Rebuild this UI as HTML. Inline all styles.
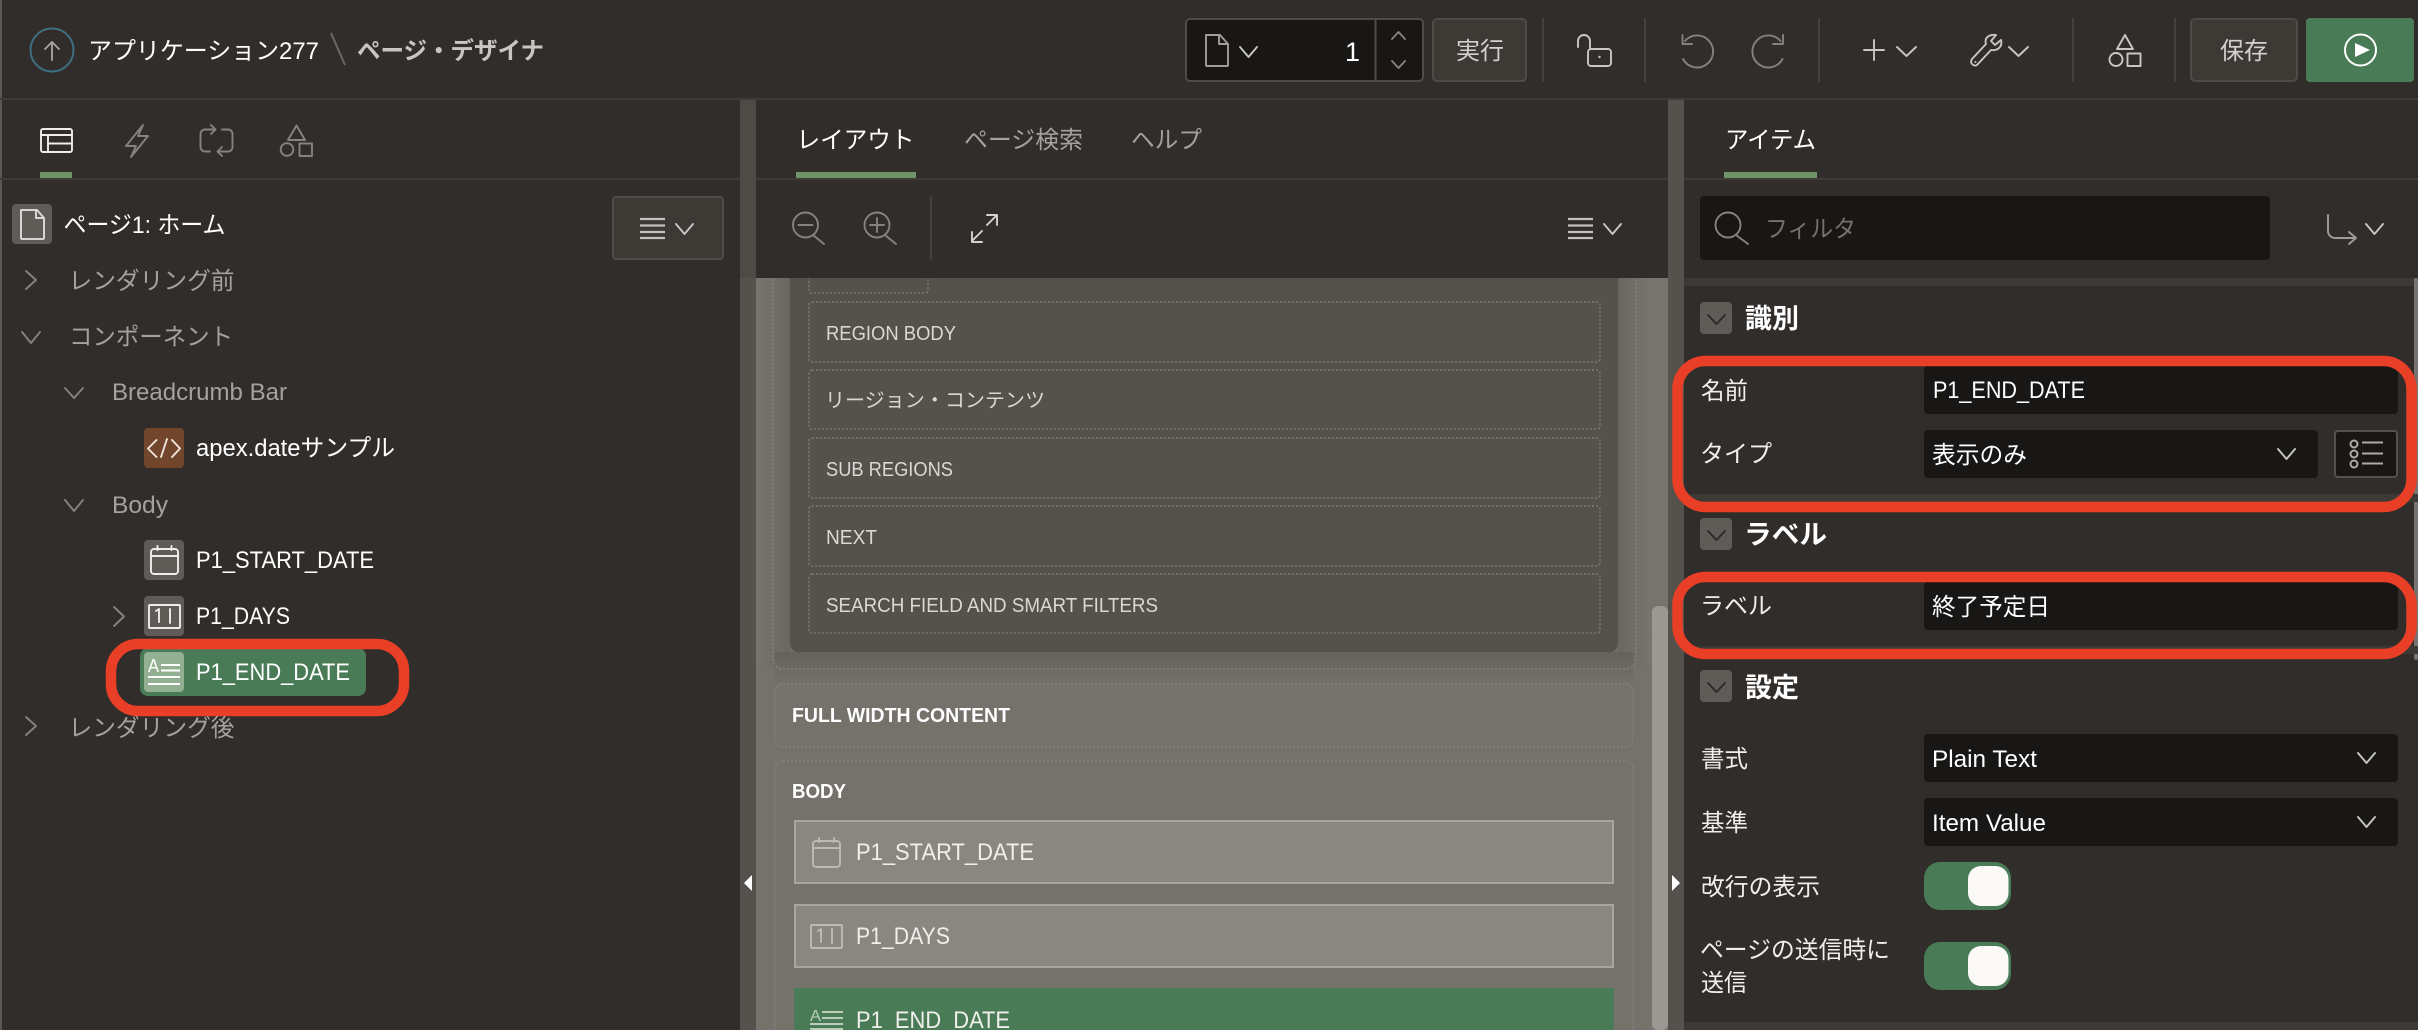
<!DOCTYPE html>
<html lang="ja">
<head>
<meta charset="utf-8">
<title>ページ・デザイナ</title>
<style>
html,body{margin:0;padding:0;background:#312d2a;width:2418px;height:1030px;overflow:hidden}
svg{display:block;font-family:"Liberation Sans","Noto Sans CJK JP",sans-serif;font-size:24px}
.w{fill:#fff}.s{fill:#f1efec}.m{fill:#a5a29d}.d{fill:#d6d4d0}
.b{font-weight:700}
.c{font-size:20px;fill:#dad8d4}
.h{font-size:27px;font-weight:700;fill:#fff}
.i{fill:none;stroke-linecap:round;stroke-linejoin:round;stroke-width:1.9}
.g1{stroke:#86827d}.g2{stroke:#c9c7c3}.g3{stroke:#f0eeeb}.g4{stroke:#8b8782}
.in{fill:#181715}
.btn{fill:#3d3a36;stroke:#4f4c48;stroke-width:2}
.dash{fill:none;stroke:#85827d;stroke-width:1.6;stroke-dasharray:2 2}
.dash2{fill:none;stroke:#7c7974;stroke-width:1.6;stroke-dasharray:2 2}
.band{fill:#3d3a36}
.ring{fill:none;stroke:#e93f26;stroke-width:10.5}
</style>
</head>
<body>
<svg width="2418" height="1030" viewBox="0 0 2418 1030" xmlns="http://www.w3.org/2000/svg">
<rect width="2418" height="1030" fill="#312d2a"/>
<rect x="0" y="0" width="2" height="1030" fill="#5b5854"/>

<!-- splitters -->
<rect x="740" y="100" width="16" height="178" fill="#4e4b47"/>
<rect x="740" y="278" width="16" height="752" fill="#55514c"/>
<rect x="1668" y="100" width="16" height="930" fill="#55514c"/>

<!-- header -->
<rect x="0" y="98" width="2418" height="2" fill="#3f3c38"/>
<circle cx="52" cy="50" r="21.5" fill="none" stroke="#3f6e80" stroke-width="2"/>
<path class="i" stroke="#a5a29d" d="M52 60V42M45 49l7-7 7 7"/>
<text class="w" x="88" y="59" textLength="231" lengthAdjust="spacingAndGlyphs">アプリケーション277</text>
<path d="M331 33L345 65" stroke="#6b6864" stroke-width="2"/>
<text class="b" fill="#c8c6c3" x="357" y="59" textLength="187" lengthAdjust="spacingAndGlyphs">ページ・デザイナ</text>

<!-- page selector -->
<rect x="1186" y="19" width="237" height="62" rx="4" fill="#181715" stroke="#4f4c48" stroke-width="2"/>
<path d="M1375.5 20V80" stroke="#4f4c48" stroke-width="2"/>
<path class="i" stroke="#a19e99" d="M1206 35H1220L1228 44V65a1 1 0 0 1-1 1H1207a1 1 0 0 1-1-1ZM1219 35V44H1228"/>
<path class="i g2" d="M1240 47l8.500 10 8.500-10"/>
<text class="w" font-size="27" x="1345" y="61" textLength="15" lengthAdjust="spacingAndGlyphs">1</text>
<path class="i g1" d="M1392 39l6.500-7 6.500 7M1392 61l6.500 7 6.500-7"/>
<rect class="btn" x="1433" y="19" width="93" height="62" rx="4"/>
<text fill="#d4d2cf" x="1456" y="59" textLength="48" lengthAdjust="spacingAndGlyphs">実行</text>
<path d="M1543 18V82M1645 18V82M1819 18V82M2073 18V82M2175 18V82" stroke="#45423e" stroke-width="2"/>

<!-- lock -->
<path class="i g2" d="M1578 47V41a6 6 0 0 1 12 0V48"/>
<rect class="i g2" x="1588" y="49" width="23" height="17" rx="3"/>
<circle cx="1599.500" cy="57" r="1.200" fill="#c9c7c3"/>

<!-- undo / redo -->
<path class="i g1" d="M1685 41A16 16 0 1 1 1683 59M1682.500 35V44H1692"/>
<path class="i g1" d="M1780.500 41A16 16 0 1 0 1782.500 59M1783 35V44H1773"/>

<!-- plus -->
<path class="i g2" d="M1874 40V60M1864 50H1884"/>
<path class="i g2" d="M1897 47l9.500 9 9.500-9"/>

<!-- wrench -->
<path class="i g2" d="M1972 59L1986 44C1984 38 1989 34 1996 35L1991 41L1995 45L2001 40C2003 47 1997 51 1991 50L1977 65C1974 67 1969 63 1972 59Z"/>
<circle cx="1975.500" cy="62" r="1" fill="#c9c7c3"/>
<path class="i g2" d="M2009 47l9.500 9 9.500-9"/>

<!-- shapes header -->
<path class="i g2" d="M2125 35L2133 49H2117Z"/>
<circle class="i g2" cx="2116" cy="59.500" r="6.500"/>
<rect class="i g2" x="2127.500" y="53.500" width="13" height="12.500"/>

<!-- save / run -->
<rect class="btn" x="2191" y="19" width="106" height="62" rx="4"/>
<text fill="#d4d2cf" x="2220" y="59" textLength="48" lengthAdjust="spacingAndGlyphs">保存</text>
<rect x="2306" y="18" width="108" height="64" rx="4" fill="#4a7b57"/>
<circle cx="2360.500" cy="50" r="15.500" fill="none" stroke="#fff" stroke-width="2"/>
<path d="M2355 43L2370 50L2355 57Z" fill="#fff"/>

<!-- left tabs -->
<rect x="0" y="178" width="740" height="2" fill="#3f3c38"/>
<path class="i g3" d="M41 135H72M48 135V152M48 143.500H72"/>
<rect class="i g3" x="41" y="129" width="31" height="23" rx="2"/>
<path class="i g1" d="M143 125L126 146H136L131 157L148 136H138Z"/>
<path class="i g1" d="M215 129.500H205a4.500 4.500 0 0 0-4.500 4.500V147a4.500 4.500 0 0 0 4.500 4.500H210M211 125l4.500 4.500-4.500 4.500"/>
<path class="i g1" d="M217.500 151.500H228a4.500 4.500 0 0 0 4.500-4.500V134a4.500 4.500 0 0 0-4.500-4.500H222M222 147l-4.500 4.500 4.500 4.500"/>
<path class="i g1" d="M296.500 125.500L305 140H288Z"/>
<circle class="i g1" cx="287" cy="149.500" r="6.300"/>
<rect class="i g1" x="299.500" y="143.500" width="12.500" height="12.500"/>
<rect x="40" y="172" width="32" height="6" fill="#6e9468"/>

<!-- left tree -->
<rect x="12" y="204" width="40" height="40" rx="4" fill="#5f5c58"/>
<path d="M21 210H37L44 218V238a1 1 0 0 1-1 1H22a1 1 0 0 1-1-1ZM36 210V218H44" fill="#5f5c58" stroke="#d8d6d2" stroke-width="2" stroke-linejoin="round"/>
<text class="w" x="63.500" y="233" textLength="162" lengthAdjust="spacingAndGlyphs">ページ1: ホーム</text>

<rect class="btn" x="613" y="197" width="110" height="62" rx="3"/>
<path d="M640 219H665M640 225.500H665M640 232H665M640 238H665" stroke="#c4c2be" stroke-width="2.200"/>
<path class="i g2" d="M676 224l8.500 10 8.500-10"/>

<path class="i g1" d="M26 271l10 9-10 9"/>
<text class="m" x="68.500" y="289" textLength="166" lengthAdjust="spacingAndGlyphs">レンダリング前</text>
<path class="i g1" d="M22 332l9 11 9-11"/>
<text class="m" x="69" y="345" textLength="164" lengthAdjust="spacingAndGlyphs">コンポーネント</text>
<path class="i g1" d="M65 388l9 10 9-10"/>
<text class="m" x="112" y="400" textLength="175" lengthAdjust="spacingAndGlyphs">Breadcrumb Bar</text>

<rect x="144" y="428" width="40" height="40" rx="4" fill="#71462d"/>
<path class="i" stroke="#f0e6dc" d="M156.500 440L148 448.500L156.500 457M167 439L161 457M172 440L180 448.500L172 457"/>
<text class="w" x="196" y="456" textLength="199" lengthAdjust="spacingAndGlyphs">apex.dateサンプル</text>

<path class="i g1" d="M65 500l9 11 9-11"/>
<text class="m" x="112" y="513" textLength="56" lengthAdjust="spacingAndGlyphs">Body</text>

<rect x="144" y="540" width="40" height="40" rx="4" fill="#5f5c58"/>
<rect class="i g3" x="151" y="549" width="27" height="25" rx="3"/>
<path class="i g3" d="M151 556H178M157.500 546V550M171.500 546V550"/>
<text class="w" x="196" y="568" textLength="178" lengthAdjust="spacingAndGlyphs">P1_START_DATE</text>

<path class="i g1" d="M114 607l10 9.500-10 9.500"/>
<rect x="144" y="596" width="40" height="40" rx="4" fill="#5f5c58"/>
<rect class="i g3" x="149" y="605" width="31" height="23" rx="1"/>
<path class="i g3" d="M156 611l3-2V622M170 609V623"/>
<text class="w" x="196" y="624" textLength="94" lengthAdjust="spacingAndGlyphs">P1_DAYS</text>

<rect x="140" y="648" width="226" height="48" rx="8" fill="#4a7b57"/>
<rect x="144" y="652" width="40" height="40" rx="4" fill="#94b093"/>
<text class="w" font-size="18" x="148" y="672" textLength="11" lengthAdjust="spacingAndGlyphs">A</text>
<path d="M161 665H180M161 670.500H180M148 677H180M148 684H180" stroke="#fff" stroke-width="2"/>
<text class="w" x="196" y="680" textLength="154" lengthAdjust="spacingAndGlyphs">P1_END_DATE</text>
<rect class="ring" x="111" y="644" width="293" height="67" rx="27"/>

<path class="i g1" d="M26 717l10 9-10 9"/>
<text class="m" x="68.500" y="736" textLength="166" lengthAdjust="spacingAndGlyphs">レンダリング後</text>

<!-- center canvas -->
<rect x="756" y="278" width="912" height="752" fill="#75716b"/>
<linearGradient id="gl" x1="0" x2="1" y1="0" y2="0"><stop offset="0" stop-color="#78746e"/><stop offset="1" stop-color="#6a6661"/></linearGradient>
<rect x="756" y="278" width="34" height="390" fill="url(#gl)"/>
<linearGradient id="gr" x1="0" x2="1" y1="0" y2="0"><stop offset="0" stop-color="#6a6661"/><stop offset="1" stop-color="#78746e"/></linearGradient>
<rect x="1618" y="278" width="34" height="390" fill="url(#gr)"/>
<linearGradient id="gb" x1="0" x2="0" y1="0" y2="1"><stop offset="0" stop-color="#65615b"/><stop offset="1" stop-color="#75716b"/></linearGradient>
<rect x="775" y="652" width="858" height="34" fill="url(#gb)"/>

<rect x="773" y="260" width="863" height="409" rx="10" class="dash"/>
<rect x="790" y="270" width="828" height="382" rx="8" fill="#55524c"/>
<rect x="809" y="250" width="119" height="43" rx="3" class="dash2"/>
<rect x="809" y="302" width="791" height="60" rx="3" class="dash2"/>
<text class="c" x="826" y="340" textLength="130" lengthAdjust="spacingAndGlyphs">REGION BODY</text>
<rect x="809" y="370" width="791" height="59" rx="3" class="dash2"/>
<text class="c" x="825" y="407" textLength="220" lengthAdjust="spacingAndGlyphs">リージョン・コンテンツ</text>
<rect x="809" y="438" width="791" height="60" rx="3" class="dash2"/>
<text class="c" x="826" y="476" textLength="127" lengthAdjust="spacingAndGlyphs">SUB REGIONS</text>
<rect x="809" y="506" width="791" height="60" rx="3" class="dash2"/>
<text class="c" x="826" y="544" textLength="51" lengthAdjust="spacingAndGlyphs">NEXT</text>
<rect x="809" y="574" width="791" height="59" rx="3" class="dash2"/>
<text class="c" x="826" y="612" textLength="332" lengthAdjust="spacingAndGlyphs">SEARCH FIELD AND SMART FILTERS</text>

<rect x="775" y="684" width="858" height="63" rx="8" class="dash"/>
<text class="c b" style="fill:#fff" x="792" y="722" textLength="218" lengthAdjust="spacingAndGlyphs">FULL WIDTH CONTENT</text>
<rect x="775" y="761" width="858" height="300" rx="8" class="dash"/>
<text class="c b" style="fill:#fff" x="792" y="798" textLength="54" lengthAdjust="spacingAndGlyphs">BODY</text>

<rect x="795" y="821" width="818" height="62" fill="#8a8680" stroke="#a9a6a1" stroke-width="2"/>
<rect class="i" stroke="#bdbab6" x="813" y="841" width="27" height="26" rx="3"/>
<path class="i" stroke="#bdbab6" d="M813 848H840M819 838V842M834 838V842"/>
<text class="s" x="856" y="860" textLength="178" lengthAdjust="spacingAndGlyphs">P1_START_DATE</text>

<rect x="795" y="905" width="818" height="62" fill="#8a8680" stroke="#a9a6a1" stroke-width="2"/>
<rect class="i" stroke="#bdbab6" x="811" y="925" width="31" height="23" rx="1"/>
<path class="i" stroke="#bdbab6" d="M818 931l3-2V942M832 929V943"/>
<text class="s" x="856" y="944" textLength="94" lengthAdjust="spacingAndGlyphs">P1_DAYS</text>

<rect x="794" y="988" width="820" height="42" fill="#4a7b57"/>
<text fill="#b9cdb9" font-size="16" x="810" y="1021" textLength="11" lengthAdjust="spacingAndGlyphs">A</text>
<path d="M822 1012H843M822 1018H843M810 1024H843M810 1029H843" stroke="#b9cdb9" stroke-width="2"/>
<text class="s" x="856" y="1028" textLength="154" lengthAdjust="spacingAndGlyphs">P1_END_DATE</text>

<!-- center scrollbar -->
<rect x="1652" y="278" width="16" height="752" fill="#77736e"/>
<rect x="1652" y="606" width="16" height="424" rx="6" fill="#9c9994"/>

<!-- center header and toolbar -->
<rect x="756" y="100" width="912" height="178" fill="#312d2a"/>
<rect x="756" y="178" width="912" height="2" fill="#3f3c38"/>
<text class="w" x="796.500" y="148" textLength="118" lengthAdjust="spacingAndGlyphs">レイアウト</text>
<rect x="796" y="172" width="120" height="6" fill="#6e9468"/>
<text class="m" x="964" y="148" textLength="119" lengthAdjust="spacingAndGlyphs">ページ検索</text>
<text class="m" x="1131" y="148" textLength="71" lengthAdjust="spacingAndGlyphs">ヘルプ</text>

<circle class="i g1" cx="805.500" cy="225" r="12.500"/>
<path class="i g1" d="M813 235L824 244M798.500 225H812.500"/>
<circle class="i g1" cx="877" cy="225" r="12.500"/>
<path class="i g1" d="M885 235L896 244M870 225H884M877 218V232"/>
<path d="M931 196V260" stroke="#45423e" stroke-width="2"/>
<path class="i" stroke="#d6d4d0" d="M972 241L982 231M972 232V242H982M997 215L987 225M987 215H997V225"/>
<path d="M1568 219H1593M1568 225.500H1593M1568 232H1593M1568 238H1593" stroke="#c4c2be" stroke-width="2.200"/>
<path class="i g2" d="M1604 224l8.500 10 8.500-10"/>

<!-- splitter arrows -->
<path d="M752 875L744 883L752 891Z" fill="#fff"/>
<path d="M1672 875L1680 883L1672 891Z" fill="#fff"/>

<!-- right panel -->
<rect x="1684" y="178" width="734" height="2" fill="#3f3c38"/>
<text class="w" x="1725" y="148" textLength="91" lengthAdjust="spacingAndGlyphs">アイテム</text>
<rect x="1724" y="172" width="93" height="6" fill="#6e9468"/>

<rect class="in" x="1700" y="196" width="570" height="64" rx="4"/>
<circle class="i g1" cx="1728" cy="225" r="12.500"/>
<path class="i g1" d="M1736 235L1748 244"/>
<text fill="#75716c" x="1765" y="237" textLength="91" lengthAdjust="spacingAndGlyphs">フィルタ</text>
<path class="i" stroke="#a19e99" d="M2328 215V231a7 7 0 0 0 7 7H2356M2349 232l7 6-7 6"/>
<path class="i g2" d="M2366 224l8.500 10 8.500-10"/>

<rect class="band" x="1684" y="278" width="734" height="8"/>
<rect x="2414" y="278" width="4" height="382" rx="2" fill="#77736e"/>

<!-- 識別 -->
<rect x="1700" y="302" width="32" height="32" rx="4" fill="#5f5c58"/>
<path class="i" stroke="#2a2724" d="M1708 315l8.500 9 8.500-9"/>
<text class="h" x="1745" y="328" textLength="54" lengthAdjust="spacingAndGlyphs">識別</text>

<text class="s" x="1701" y="399" textLength="47" lengthAdjust="spacingAndGlyphs">名前</text>
<rect class="in" x="1924" y="366" width="474" height="48" rx="4"/>
<text class="w" x="1933" y="398" textLength="152" lengthAdjust="spacingAndGlyphs">P1_END_DATE</text>
<text class="s" x="1700" y="462" textLength="72" lengthAdjust="spacingAndGlyphs">タイプ</text>
<rect class="in" x="1924" y="430" width="394" height="48" rx="4"/>
<text class="w" x="1932" y="463" textLength="95" lengthAdjust="spacingAndGlyphs">表示のみ</text>
<path class="i g2" d="M2278 449l8.500 10 8.500-10"/>
<rect x="2335" y="431" width="62" height="46" rx="3" fill="#181715" stroke="#55524c" stroke-width="2"/>
<circle cx="2354" cy="444" r="3.500" fill="none" stroke="#aeaba6" stroke-width="2"/>
<circle cx="2354" cy="454" r="3.500" fill="none" stroke="#aeaba6" stroke-width="2"/>
<circle cx="2354" cy="464" r="3.500" fill="none" stroke="#aeaba6" stroke-width="2"/>
<path d="M2362 442.500H2383M2362 453.500H2383M2362 463.500H2383" stroke="#aeaba6" stroke-width="2"/>
<rect class="band" x="1684" y="494" width="734" height="8"/>
<rect class="ring" x="1677.500" y="361" width="734" height="146" rx="28"/>

<!-- ラベル -->
<rect x="1700" y="518" width="32" height="32" rx="4" fill="#5f5c58"/>
<path class="i" stroke="#2a2724" d="M1708 531l8.500 9 8.500-9"/>
<text class="h" x="1744" y="544" textLength="83" lengthAdjust="spacingAndGlyphs">ラベル</text>

<text class="s" x="1700" y="614" textLength="72" lengthAdjust="spacingAndGlyphs">ラベル</text>
<rect class="in" x="1924" y="582" width="474" height="48" rx="4"/>
<text class="w" x="1932" y="615" textLength="118" lengthAdjust="spacingAndGlyphs">終了予定日</text>
<rect class="band" x="1684" y="646" width="734" height="8"/>
<rect class="ring" x="1677.500" y="577" width="734" height="77" rx="28"/>

<!-- 設定 -->
<rect x="1700" y="670" width="32" height="32" rx="4" fill="#5f5c58"/>
<path class="i" stroke="#2a2724" d="M1708 683l8.500 9 8.500-9"/>
<text class="h" x="1745" y="697" textLength="54" lengthAdjust="spacingAndGlyphs">設定</text>

<text class="s" x="1701" y="767" textLength="47" lengthAdjust="spacingAndGlyphs">書式</text>
<rect class="in" x="1924" y="734" width="474" height="48" rx="4"/>
<text class="w" x="1932" y="767" textLength="105" lengthAdjust="spacingAndGlyphs">Plain Text</text>
<path class="i g2" d="M2358 753l8.500 10 8.500-10"/>

<text class="s" x="1701" y="831" textLength="47" lengthAdjust="spacingAndGlyphs">基準</text>
<rect class="in" x="1924" y="798" width="474" height="48" rx="4"/>
<text class="w" x="1932" y="831" textLength="114" lengthAdjust="spacingAndGlyphs">Item Value</text>
<path class="i g2" d="M2358 817l8.500 10 8.500-10"/>

<text class="s" x="1701" y="895" textLength="119" lengthAdjust="spacingAndGlyphs">改行の表示</text>
<rect x="1924" y="862" width="87" height="48" rx="16" fill="#4a7b57"/>
<rect x="1968" y="866" width="40.500" height="40" rx="13" fill="#fbfaf8"/>

<text class="s" x="1700" y="958" textLength="190" lengthAdjust="spacingAndGlyphs">ページの送信時に</text>
<text class="s" x="1701" y="991" textLength="46" lengthAdjust="spacingAndGlyphs">送信</text>
<rect x="1924" y="942" width="87" height="48" rx="16" fill="#4a7b57"/>
<rect x="1968" y="946" width="40.500" height="40" rx="13" fill="#fbfaf8"/>

<rect class="band" x="1684" y="1022" width="734" height="8"/>
</svg>
</body>
</html>
